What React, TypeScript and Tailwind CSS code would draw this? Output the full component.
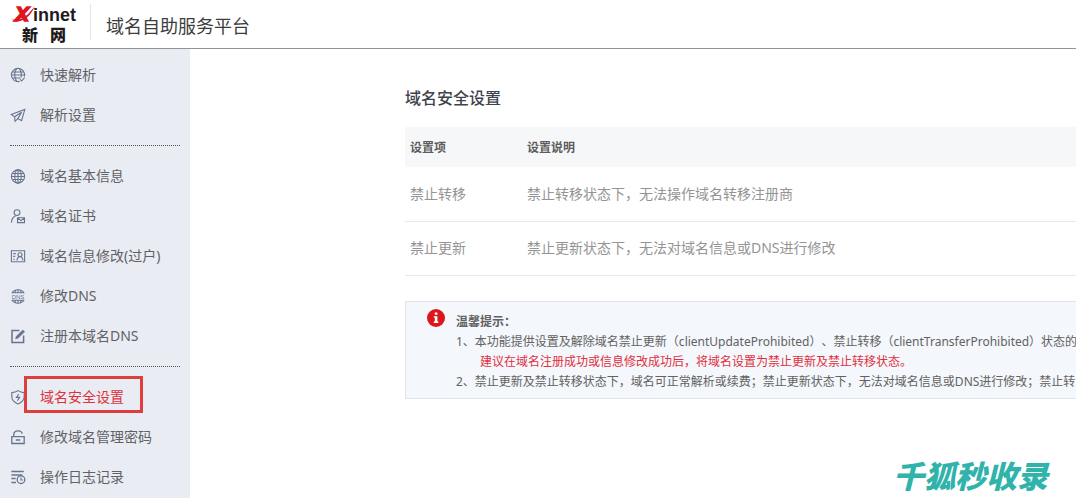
import React from 'react';

const menuGroups = [
  [
    { label: '快速解析', icon: 'globeArrow' },
    { label: '解析设置', icon: 'plane' },
  ],
  [
    { label: '域名基本信息', icon: 'globe' },
    { label: '域名证书', icon: 'userMail' },
    { label: '域名信息修改(过户)', icon: 'card' },
    { label: '修改DNS', icon: 'dns' },
    { label: '注册本域名DNS', icon: 'edit' },
  ],
  [
    { label: '域名安全设置', icon: 'shield', active: true },
    { label: '修改域名管理密码', icon: 'lock' },
    { label: '操作日志记录', icon: 'log' },
  ],
];

const rows = [
  { name: '禁止转移', text: '禁止转移状态下，无法操作域名转移注册商' },
  { name: '禁止更新', text: '禁止更新状态下，无法对域名信息或DNS进行修改' },
];

const icons: Record<string, React.ReactNode> = {
  globeArrow: (
    <>
      <path d="M9.6 14.4A6.6 6.6 0 1 1 14.4 9.6" />
      <path d="M6.4 1.8C4.3 5.5 4.3 10.5 6.6 14.2M9.6 1.8c1.6 2.6 2.1 5.4 1.6 8.6M2.4 5h11.2M1.4 8h13.2M2.4 11h8.2" />
      <path d="M10 12.4l1.6 1.6 3-3.4" />
    </>
  ),
  plane: (
    <>
      <path d="M1.2 7.4 14.8 2.4l-3.2 11.2-3.8-2-2.8 2.8-.4-4.6z" />
      <path d="M4.6 9.8 11.6 5.2 7.8 11.6" />
    </>
  ),
  globe: (
    <>
      <circle cx="8" cy="8.5" r="6.6" />
      <ellipse cx="8" cy="8.5" rx="3.2" ry="6.6" />
      <path d="M8 1.9v13.2M2.3 5.5h11.4M1.4 8.5h13.2M2.3 11.5h11.4" />
    </>
  ),
  userMail: (
    <>
      <circle cx="7" cy="4.6" r="2.9" />
      <path d="M1.4 14.6c.2-3.6 1.7-5.8 4.2-6.9" />
      <path d="M7.5 9.8h7v4.8h-7zM7.5 10l3.5 2.6 3.5-2.6" />
    </>
  ),
  card: (
    <>
      <path d="M1.4 2.8h13.2v11H1.4z" />
      <path d="M3.2 5.6h2.6M3.2 8.4h2M3.2 11.2h1.6" />
      <circle cx="10" cy="6.8" r="2" />
      <path d="M6.8 12.4c.3-2 1.2-3 2.3-3.6M13 12.4c-.3-2-1-3-2-3.6" />
    </>
  ),
  dns: (
    <>
      <path d="M1.8 5.2C3.2 2.9 5.5 1.7 8 1.7s4.8 1.2 6.2 3.5M1.8 11.8c1.4 2.3 3.7 3.5 6.2 3.5s4.8-1.2 6.2-3.5" />
      <path d="M2.4 4.8h11.2M2.4 12.2h11.2M8 1.8v3M8 12.2v3M5.6 2.2l-.8 2.6M10.4 2.2l.8 2.6M5.6 14.8l-.8-2.6M10.4 14.8l.8-2.6" />
      <text x="8" y="10.7" textAnchor="middle" fontSize="6" fontFamily="Liberation Sans" fill="currentColor" stroke="none">
        DNS
      </text>
    </>
  ),
  edit: (
    <>
      <path d="M9.4 2.4H2v12h11.6V7.4" strokeWidth="1.5" />
      <path d="M5.6 10.8l.6-2.4L12.8 2l1.8 1.8L8 10.2z" fill="currentColor" strokeWidth="0.6" />
    </>
  ),
  shield: (
    <>
      <path d="M8 1.6c1.8 1.3 3.8 1.9 6.2 2v4c0 3.6-2.6 6-6.2 7.4-3.6-1.4-6.2-3.8-6.2-7.4v-4c2.4-.1 4.4-.7 6.2-2z" />
      <path d="M8.8 5L6.4 8.4h3.2l-2.2 3.2" />
    </>
  ),
  lock: (
    <path
      d="M1.8 7.6h12.4v6.9H1.8zM3.8 7.6V5.4c0-2.200 1.700-3.600 4.200-3.600s4 1.200 4.200 3M5.800 11h4.400"
      strokeWidth="1.3"
    />
  ),
  log: (
    <>
      <path d="M1.4 2.5h12.4M1.4 6h11M1.4 9.5h4.2M1.4 13.5h4.6" strokeWidth="1.5" />
      <circle cx="11" cy="10.7" r="3.8" strokeWidth="1.3" />
      <path d="M11 8.6V11h2" />
    </>
  ),
};

const MenuIcon = ({ name }: { name: string }) => (
  <svg
    className="w-4 h-4 shrink-0 text-[#68748e]"
    viewBox="0 0 16 16"
    fill="none"
    stroke="currentColor"
    strokeWidth="1.1"
    aria-hidden="true"
  >
    {icons[name]}
  </svg>
);

const Logo = () => (
  <svg className="w-[90px] h-12 shrink-0" viewBox="0 0 90 48" role="img" aria-label="Xinnet 新网">
    <text x="15" y="21" fontFamily="Liberation Sans" fontWeight="700" fontStyle="italic" fontSize="21" fill="#e0141e" stroke="#e0141e" strokeWidth="1.6">
      X
    </text>
    <path d="M12 18c1.5 3.600 8 2.600 14-2.200 4-3.200 6-6 8.500-9.500-1.500 5-4.500 9-9 12.200-6 4.200-12.800 4-13.500-.5z" fill="#e0141e" />
    <text x="33" y="21" fontFamily="Liberation Sans" fontWeight="700" fontSize="18" fill="#1f1b1c">
      innet
    </text>
    <g fontFamily="Noto Sans CJK SC" fontWeight="900" fontSize="16" fill="#1f1b1c">
      <text x="22" y="41">新</text>
      <text x="50" y="41">网</text>
    </g>
  </svg>
);

const Header = () => (
  <header className="flex h-[49px] border-b border-[#929396]">
    <Logo />
    <div className="mt-1 h-9 w-px bg-[#e6e6e6]" />
    <div className="ml-[15px] mt-1 text-lg leading-[44px] text-[#3c3c3c] whitespace-nowrap">域名自助服务平台</div>
  </header>
);

const Sidebar = () => (
  <nav className="w-[190px] shrink-0 bg-[#e9ecf3] pt-1.5">
    {menuGroups.map((group, i) => (
      <React.Fragment key={i}>
        {i > 0 && <hr className="mx-2.5 my-2.5 border-t border-dotted border-[#555]" />}
        <ul>
          {group.map((item) => (
            <MenuItem key={item.label} {...item} />
          ))}
        </ul>
      </React.Fragment>
    ))}
  </nav>
);

const MenuItem = ({ label, icon, active }: { label: string; icon: string; active?: boolean }) => (
  <li className="relative">
    <a
      href="#"
      className={`flex h-10 items-center gap-3.5 pl-2.5 text-sm whitespace-nowrap ${active ? 'text-[#e0303c]' : 'text-[#626266]'}`}
    >
      <MenuIcon name={icon} />
      {label}
    </a>
    {active && (
      <span className="pointer-events-none absolute -top-px left-6 h-[37px] w-[119px] border-3 border-[#de3e3e]" />
    )}
  </li>
);

const SettingsTable = () => (
  <table className="mt-[17px] w-full border-separate border-spacing-0 text-left">
    <thead>
      <tr className="h-[41px] bg-[#f6f7f9] text-xs text-[#5c5c5c]">
        <th className="w-[117px] border-b border-white pt-0.5 pl-[5px] font-bold">设置项</th>
        <th className="border-b border-white pt-0.5 pl-[5px] font-bold">设置说明</th>
      </tr>
    </thead>
    <tbody>
      {rows.map((row) => (
        <tr key={row.name} className="h-[54px] text-sm text-[#949494]">
          <td className="border-b border-[#e8e8e8] pb-0.5 pl-[5px]">{row.name}</td>
          <td className="border-b border-[#e8e8e8] pb-0.5 pl-[5px]">{row.text}</td>
        </tr>
      ))}
    </tbody>
  </table>
);

const Notice = () => (
  <section className="mt-[25px] flex gap-[11px] overflow-hidden border border-r-0 border-[#e0e5ec] bg-[#f4f7fb] pb-1.5 pl-[21px] text-xs leading-5 text-[#626262] whitespace-nowrap">
    <svg className="mt-[7px] h-[18px] w-[18px] shrink-0" viewBox="0 0 18 18" aria-hidden="true">
      <circle cx="9" cy="9" r="9" fill="#df151c" />
      <path d="M7.8 3.6h2.6v2.2H7.8zM6.8 7.2h3.6v5.4h1V14H6.8v-1.4h1v-4h-1z" fill="#fff" />
    </svg>
    <div className="pt-2.5">
      <h2 className="font-bold">温馨提示：</h2>
      <p>1、本功能提供设置及解除域名禁止更新（clientUpdateProhibited）、禁止转移（clientTransferProhibited）状态的</p>
      <p className="pl-6 text-[#e0303c]">建议在域名注册成功或信息修改成功后，将域名设置为禁止更新及禁止转移状态。</p>
      <p>2、禁止更新及禁止转移状态下，域名可正常解析或续费；禁止更新状态下，无法对域名信息或DNS进行修改；禁止转</p>
    </div>
  </section>
);

const App = () => (
  <div className="relative flex min-h-screen flex-col overflow-hidden bg-white font-['Noto_Sans','Noto_Sans_CJK_SC',sans-serif] [text-spacing-trim:space-all]">
    <Header />
    <div className="flex flex-1">
      <Sidebar />
      <main className="min-w-0 flex-1 pl-[215px] pt-[37px]">
        <h1 className="text-base leading-6 font-medium text-[#3f434d]">域名安全设置</h1>
        <SettingsTable />
        <Notice />
      </main>
    </div>
    <div className="absolute right-7 bottom-1 text-[31px] leading-9 font-black italic text-[#2fb3aa]">千狐秒收录</div>
  </div>
);

export default App;
